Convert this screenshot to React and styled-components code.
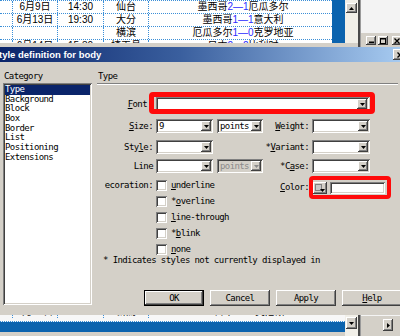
import React from 'react';
import styled, { createGlobalStyle, css } from 'styled-components';

const GRAY = '#d4d0c8';
const DOT = '#3b8fd8';

const GlobalStyle = createGlobalStyle`
  html, body { margin: 0; padding: 0; background: ${GRAY}; }
  body { width: 400px; height: 336px; overflow: hidden; }
  * { box-sizing: border-box; }
`;

const raised = css`
  background: ${GRAY};
  box-shadow: inset -1px -1px #404040, inset 1px 1px #ffffff, inset -2px -2px #808080, inset 2px 2px ${GRAY};
`;
const sunken = css`
  box-shadow: inset 1px 1px #808080, inset -1px -1px #ffffff, inset 2px 2px #404040, inset -2px -2px ${GRAY};
`;

const Screen = styled.div`
  width: 400px;
  height: 336px;
  overflow: hidden;
  display: flex;
  flex-direction: column;
  background: ${GRAY};
`;

/* ---------- background document ---------- */
const Band = styled.div`
  display: flex;
  flex: none;
  height: ${p => p.$h}px;
`;
const DocColumn = styled.div`
  display: flex;
  flex-direction: column;
  width: 358px;
  flex: none;
`;
const DocStrip = styled.div`
  display: flex;
  height: 43px;
  flex: none;
`;
const DocTable = styled.div`
  width: 332px;
  height: 43px;
  overflow: hidden;
  background: #fff;
`;
const DocRow = styled.div`
  display: grid;
  grid-template-columns: 13px 45px 46px 45px 1fr;
  height: 13px;
  border-top: 1px dotted ${DOT};
  font-family: "Liberation Sans", "Noto Sans CJK SC", sans-serif;
  font-size: 10px;
  line-height: 12px;
  color: #000;
  margin-top: ${p => p.$shift || 0}px;
`;
const DocCell = styled.div`
  border-right: 1px dotted ${DOT};
  text-align: center;
  white-space: nowrap;
  overflow: hidden;
  &:last-child { border-right: none; padding-left: 5px; }
`;
const Score = styled.span`
  color: #2c2cff;
`;
const BlueStrip = styled.div`
  width: 13px;
  background: #0b63ae;
`;
const VScroll = styled.div`
  width: 13px;
  background: #f1efe8;
  padding: ${p => p.$pt}px 1px 0 1px;
`;
const ScrollBtn = styled.div`
  ${raised};
  width: ${p => p.$w || 11}px;
  height: ${p => p.$h || 10}px;
  display: flex;
  align-items: center;
  justify-content: center;
  flex: none;
`;
const WinEdge = styled.div`
  width: 3px;
  flex: none;
  background: #4a4a4a;
  border-right: 1px solid #9a9a9a;
`;
const OuterPane = styled.div`
  flex: 1;
  display: flex;
  flex-direction: column;
  background: ${GRAY};
`;
const OuterTop = styled.div`
  height: 33px;
  background: #f3f3f3;
  flex: none;
`;
const WinButtons = styled.div`
  display: flex;
  gap: 2px;
  padding: 3px 0 0 5px;
`;
const WinBtn = styled.div`
  ${raised};
  width: 10px;
  height: 9px;
  flex: none;
  display: flex;
  align-items: center;
  justify-content: center;
  margin-left: ${p => p.$ml || 0}px;
`;

/* ---------- dialog ---------- */
const TitleBar = styled.div`
  height: 15px;
  flex: none;
  display: flex;
  align-items: center;
  justify-content: space-between;
  overflow: hidden;
  background: linear-gradient(to right, #0a246a 0%, #3a5f9e 45%, #a6caf0 100%);
  color: #fff;
  font-family: "Liberation Sans", sans-serif;
  font-weight: bold;
  font-size: 9.5px;
  line-height: 15px;
`;
const TitleText = styled.span`
  white-space: nowrap;
  margin-left: -1px;
`;
const TitleClose = styled.div`
  ${raised};
  width: 14px;
  height: 11px;
  margin-right: -7px;
  display: flex;
  align-items: center;
  justify-content: center;
  flex: none;
`;

const Body = styled.div`
  height: 253px;
  flex: none;
  display: flex;
  font-family: "DejaVu Sans Mono", "Liberation Mono", monospace;
  font-size: 9px;
  letter-spacing: -0.6px;
  color: #000;
`;

const CategoryColumn = styled.div`
  width: 97px;
  flex: none;
  display: flex;
  flex-direction: column;
  padding: 9px 5px 10px 3px;
`;
const Heading = styled.div`
  line-height: 10px;
  height: 10px;
  padding-left: 1px;
  white-space: nowrap;
`;
const ListBox = styled.ul`
  ${sunken};
  background: #fff;
  margin: 2px 0 0;
  padding: 2px;
  list-style: none;
  flex: 1;
`;
const ListItem = styled.li`
  line-height: 9.7px;
  height: 9.7px;
  padding-left: 0;
  white-space: nowrap;
  background: ${p => (p.$selected ? '#0a246a' : 'transparent')};
  color: ${p => (p.$selected ? '#fff' : '#000')};
`;

const TypePanel = styled.div`
  flex: 1;
  display: flex;
  flex-direction: column;
  padding: 9px 0 9px 0;
  min-width: 0;
`;
const Separator = styled.div`
  height: 2px;
  margin: 2px 2px 0 0;
  border-top: 1px solid #808080;
  border-bottom: 1px solid #fff;
  flex: none;
`;

const FormRow = styled.div`
  display: grid;
  grid-template-columns: 59px 57px 50px 49px 58px 1fr;
  align-items: ${p => (p.$top ? 'start' : 'center')};
  margin-top: ${p => p.$mt}px;
  flex: none;
`;
const Label = styled.div`
  grid-column: ${p => p.$col || 1};
  text-align: right;
  padding-right: ${p => p.$pr ?? 3}px;
  white-space: nowrap;
  line-height: ${p => p.$lh || 14}px;
  margin-top: ${p => p.$mt || 0}px;
  u { text-decoration-thickness: 1px; text-underline-offset: 1px; }
`;
const ClippedLabel = styled.div`
  grid-column: 1;
  display: flex;
  justify-content: flex-end;
  overflow: hidden;
  margin-left: 8px;
  padding-right: 3px;
  line-height: 11px;
  white-space: nowrap;
`;
const Field = styled.div`
  ${sunken};
  grid-column: ${p => p.$col};
  background: ${p => (p.$disabled ? GRAY : '#fff')};
  color: ${p => (p.$disabled ? '#8a8a8a' : '#000')};
  height: 14px;
  padding: 2px;
  display: flex;
  align-items: center;
  margin-left: ${p => p.$ml || 0}px;
  margin-right: ${p => p.$mr || 0}px;
  position: relative;
`;
const FieldValue = styled.span`
  flex: 1;
  padding-left: 1px;
  line-height: 10px;
  white-space: nowrap;
  overflow: hidden;
`;
const ArrowBtn = styled.span`
  ${raised};
  width: 10px;
  height: 10px;
  flex: none;
  display: flex;
  align-items: center;
  justify-content: center;
`;
const RedMark = styled.span`
  position: absolute;
  top: ${p => p.$t}px;
  right: ${p => p.$r}px;
  bottom: ${p => p.$b}px;
  left: ${p => p.$l}px;
  border: ${p => p.$w}px solid #ff0a0a;
  border-radius: 4px;
  pointer-events: none;
`;

const CheckList = styled.div`
  grid-column: 2 / 4;
  display: flex;
  flex-direction: column;
  gap: 5px;
`;
const CheckItem = styled.label`
  display: flex;
  align-items: center;
  gap: 4px;
  height: 11px;
  line-height: 11px;
  white-space: nowrap;
`;
const CheckBox = styled.span`
  ${sunken};
  background: #fff;
  width: 11px;
  height: 11px;
  flex: none;
`;
const ColorFields = styled.div`
  grid-column: 5 / 7;
  justify-self: start;
  display: flex;
  gap: 3px;
  margin: 2px 0 0 1px;
  position: relative;
`;
const Swatch = styled.span`
  ${raised};
  width: 14px;
  height: 12px;
  position: relative;
  flex: none;
`;
const SwatchChip = styled.span`
  position: absolute;
  left: 2px;
  top: 2px;
  width: 7px;
  height: 7px;
  background: #c8c8c8;
  border: 1px solid #808080;
`;
const SwatchArrow = styled.span`
  position: absolute;
  right: 2px;
  bottom: 2px;
  display: flex;
`;
const ColorText = styled.span`
  ${sunken};
  background: #fff;
  width: 55px;
  height: 12px;
  flex: none;
`;
const Note = styled.div`
  margin: 0 0 0 6px;
  line-height: 10px;
  white-space: nowrap;
  flex: none;
`;
const ButtonRow = styled.div`
  display: flex;
  gap: 6px;
  margin-top: auto;
  padding-left: 47px;
  flex: none;
`;
const PushButton = styled.button`
  ${raised};
  border: none;
  width: 60px;
  height: 16px;
  flex: none;
  padding: 0;
  font: inherit;
  letter-spacing: inherit;
  color: #000;
  ${p => p.$default && css`
    box-shadow: inset 0 0 0 1px #000, inset -2px -2px #404040, inset 2px 2px #fff, inset -3px -3px #808080;
  `}
  u { text-decoration-thickness: 1px; }
`;

/* ---------- bottom document strip ---------- */
const BottomDoc = styled.div`
  width: 345px;
  flex: none;
  display: flex;
  flex-direction: column;
`;
const DocStub = styled.div`
  height: 7px;
  flex: none;
  overflow: hidden;
  background: #f7f7f7;
  border-bottom: 1px dotted ${DOT};
`;
const BlueBar = styled.div`
  height: 10px;
  flex: none;
  background: #0b63ae;
`;
const BottomPane = styled.div`
  flex: 1;
  background: ${GRAY};
  border-top: 1px solid #f4f4f4;
  padding: 3px 0 0 22px;
`;

const Tri = ({ dir = 'down', color = '#000' }) => {
  const isH = dir === 'right';
  const pts = {
    down: '0,0 5,0 2.5,3',
    up: '0,3 5,3 2.5,0',
    right: '0,0 3,2.5 0,5',
  }[dir];
  return (
    <svg width={isH ? 3 : 5} height={isH ? 5 : 3} viewBox={isH ? '0 0 3 5' : '0 0 5 3'}>
      <polygon points={pts} fill={color} />
    </svg>
  );
};

const CloseGlyph = ({ size = 6 }) => (
  <svg width={size} height={size} viewBox="0 0 6 6">
    <path d="M0.5 0.5 L5.5 5.5 M5.5 0.5 L0.5 5.5" stroke="#000" strokeWidth="1.3" />
  </svg>
);

const rows = [
  ['', '6月9日', '14:30', '仙台', <>墨西哥<Score>2—1</Score>厄瓜多尔</>],
  ['', '6月13日', '19:30', '大分', <>墨西哥<Score>1—1</Score>意大利</>],
  ['', '', '', '横滨', <>厄瓜多尔<Score>1—0</Score>克罗地亚</>],
  ['', '6月14日', '15:30', '埼玉县', <>日本<Score>2—2</Score>比利时</>],
];

const Select = ({ col, value, disabled, ml, mr }) => (
  <Field $col={col} $disabled={disabled} $ml={ml} $mr={mr}>
    <FieldValue>{value}</FieldValue>
    <ArrowBtn>
      <Tri color={disabled ? '#8a8a8a' : '#000'} />
    </ArrowBtn>
  </Field>
);

export default function App() {
  return (
    <Screen>
      <GlobalStyle />
      <Band $h={47}>
        <DocColumn>
          <DocStrip>
            <DocTable>
              {rows.map((r, i) => (
                <DocRow key={i}>
                  {r.map((c, j) => (
                    <DocCell key={j}>{c}</DocCell>
                  ))}
                </DocRow>
              ))}
            </DocTable>
            <BlueStrip />
            <VScroll $pt={3}>
              <ScrollBtn>
                <Tri dir="up" />
              </ScrollBtn>
            </VScroll>
          </DocStrip>
        </DocColumn>
        <WinEdge />
        <OuterPane>
          <OuterTop />
          <WinButtons>
            <WinBtn>
              <svg width="5" height="5" viewBox="0 0 5 5"><rect x="0" y="3.5" width="5" height="1.5" fill="#000" /></svg>
            </WinBtn>
            <WinBtn>
              <svg width="6" height="6" viewBox="0 0 6 6"><rect x="0.5" y="0.5" width="5" height="5" fill="none" stroke="#000" strokeWidth="1" /><rect x="0" y="0" width="6" height="1.5" fill="#000" /></svg>
            </WinBtn>
            <WinBtn $ml={2}>
              <CloseGlyph size={6} />
            </WinBtn>
          </WinButtons>
        </OuterPane>
      </Band>

      <TitleBar>
        <TitleText>tyle definition for body</TitleText>
        <TitleClose>
          <CloseGlyph size={6} />
        </TitleClose>
      </TitleBar>

      <Body>
        <CategoryColumn>
          <Heading>Category</Heading>
          <ListBox>
            {['Type', 'Background', 'Block', 'Box', 'Border', 'List', 'Positioning', 'Extensions'].map((c, i) => (
              <ListItem key={c} $selected={i === 0}>{c}</ListItem>
            ))}
          </ListBox>
        </CategoryColumn>

        <TypePanel>
          <Heading>Type</Heading>
          <Separator />

          <FormRow $mt={12}>
            <Label $pr={9}><u>F</u>ont</Label>
            <Field $col="2 / 6" $mr={1}>
              <FieldValue />
              <ArrowBtn><Tri /></ArrowBtn>
              <RedMark $t={-5} $b={-3} $l={-7} $r={-6} $w={5} />
            </Field>
          </FormRow>

          <FormRow $mt={8}>
            <Label><u>S</u>ize:</Label>
            <Select col={2} value="9" />
            <Select col={3} value="points" ml={4} />
            <Label $col={4}><u>W</u>eight:</Label>
            <Select col={5} value="" />
          </FormRow>

          <FormRow $mt={7}>
            <Label>Sty<u>l</u>e:</Label>
            <Select col={2} value="" />
            <Label $col={4}>*<u>V</u>ariant:</Label>
            <Select col={5} value="" />
          </FormRow>

          <FormRow $mt={5}>
            <Label>Line</Label>
            <Select col={2} value="" />
            <Select col={3} value="points" ml={4} disabled />
            <Label $col={4}>*C<u>a</u>se:</Label>
            <Select col={5} value="" />
          </FormRow>

          <FormRow $mt={7} $top>
            <ClippedLabel>Decoration:</ClippedLabel>
            <CheckList>
              <CheckItem><CheckBox /><span><u>u</u>nderline</span></CheckItem>
              <CheckItem><CheckBox /><span>*<u>o</u>verline</span></CheckItem>
              <CheckItem><CheckBox /><span><u>l</u>ine-through</span></CheckItem>
              <CheckItem><CheckBox /><span>*<u>b</u>link</span></CheckItem>
              <CheckItem><CheckBox /><span><u>n</u>one</span></CheckItem>
            </CheckList>
            <Label $col={4} $lh={11} $mt={2}><u>C</u>olor:</Label>
            <ColorFields>
              <Swatch>
                <SwatchChip />
                <SwatchArrow><Tri /></SwatchArrow>
              </Swatch>
              <ColorText />
              <RedMark $t={-6} $b={-5} $l={-4} $r={-6} $w={4} />
            </ColorFields>
          </FormRow>

          <Note>* Indicates styles not currently displayed in</Note>

          <ButtonRow>
            <PushButton $default>OK</PushButton>
            <PushButton>Cancel</PushButton>
            <PushButton>Apply</PushButton>
            <PushButton><u>H</u>elp</PushButton>
          </ButtonRow>
        </TypePanel>
      </Body>

      <Band $h={21}>
        <BottomDoc>
          <DocStub>
            <DocRow $shift={-10}>
              <DocCell />
              <DocCell>6月14日</DocCell>
              <DocCell>18:30</DocCell>
              <DocCell>新潟</DocCell>
              <DocCell>日本<Score>1—0</Score>突尼斯</DocCell>
            </DocRow>
          </DocStub>
          <BlueBar />
        </BottomDoc>
        <VScroll $pt={2}>
          <ScrollBtn $h={12}>
            <Tri />
          </ScrollBtn>
        </VScroll>
        <WinEdge />
        <BottomPane>
          <ScrollBtn $w={10} $h={12}>
            <Tri dir="right" />
          </ScrollBtn>
        </BottomPane>
      </Band>
    </Screen>
  );
}
